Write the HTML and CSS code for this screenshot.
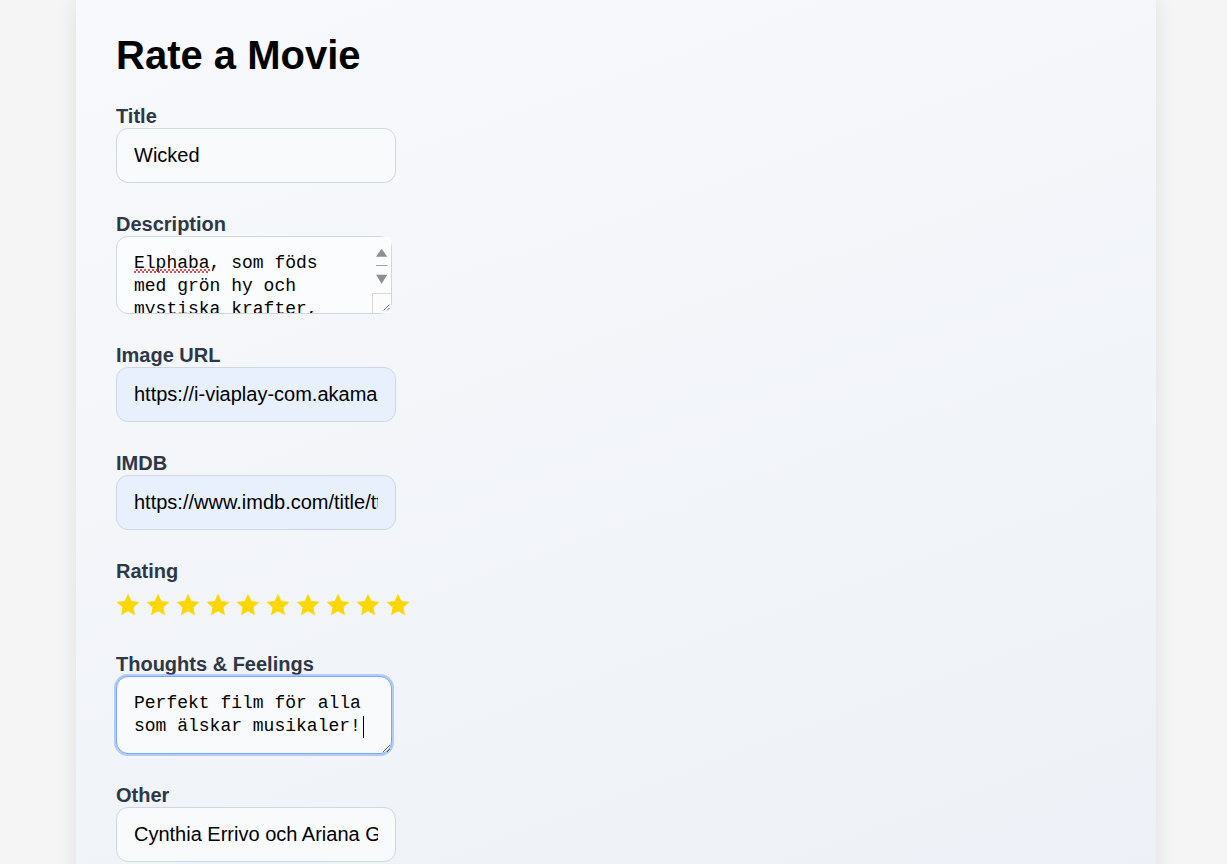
FILE: index.html
```html
<!DOCTYPE html>
<html lang="sv">
<head>
<meta charset="utf-8">
<title>Rate a Movie</title>
<link rel="stylesheet" href="styles.css">
</head>
<body>
<main class="card">
  <h1 class="page-title">Rate a Movie</h1>
  <form class="movie-form">
    <div class="group">
      <label class="label" for="title">Title</label>
      <input class="field" id="title" type="text" value="Wicked">
    </div>
    <div class="group">
      <label class="label" for="desc">Description</label>
      <div class="area-wrap">
        <textarea class="area area-scroll" id="desc" spellcheck="false">Elphaba, som föds med grön hy och mystiska krafter, blir vän med den populära Galinda när de båda studerar vid Shiz universitet i Oz.</textarea>
        <span class="squiggle"></span>
        <svg class="fake-scroll" viewBox="0 0 19 76" aria-hidden="true">
          <rect x="0" y="0" width="19" height="76" fill="#fcfcfd"/>
          <path d="M4 19.7h11.3L9.65 11.7z" fill="#8f8f8f"/>
          <path d="M4 28.5h11.5" stroke="#a0a0a0" stroke-width="1"/>
          <path d="M4 37.7h11.3L9.65 46.7z" fill="#8f8f8f"/>
          <path d="M0.5 76V56.5H19" fill="none" stroke="#d4d7dc" stroke-width="1"/>
          <path d="M17.5 67.5L11.5 73.5M17.5 71L15 73.5" stroke="#6f6f6f" stroke-width="1"/>
        </svg>
      </div>
    </div>
    <div class="group">
      <label class="label" for="img">Image URL</label>
      <input class="field field-filled" id="img" type="text" value="https://i-viaplay-com.akamaized.net/viaplay-prod/wicked.jpg">
    </div>
    <div class="group">
      <label class="label" for="imdb">IMDB</label>
      <input class="field field-filled" id="imdb" type="text" value="https://www.imdb.com/title/tt1262426/">
    </div>
    <div class="group">
      <span class="label">Rating</span>
      <div class="stars">
        <svg class="star" viewBox="0 0 24 24"><path d="M12 .8l3.4 7.3 7.9.9-5.9 5.4 1.6 7.9L12 18.3l-7 4 1.6-7.9L.7 9l7.9-.9z"/></svg>
        <svg class="star" viewBox="0 0 24 24"><path d="M12 .8l3.4 7.3 7.9.9-5.9 5.4 1.6 7.9L12 18.3l-7 4 1.6-7.9L.7 9l7.9-.9z"/></svg>
        <svg class="star" viewBox="0 0 24 24"><path d="M12 .8l3.4 7.3 7.9.9-5.9 5.4 1.6 7.9L12 18.3l-7 4 1.6-7.9L.7 9l7.9-.9z"/></svg>
        <svg class="star" viewBox="0 0 24 24"><path d="M12 .8l3.4 7.3 7.9.9-5.9 5.4 1.6 7.9L12 18.3l-7 4 1.6-7.9L.7 9l7.9-.9z"/></svg>
        <svg class="star" viewBox="0 0 24 24"><path d="M12 .8l3.4 7.3 7.9.9-5.9 5.4 1.6 7.9L12 18.3l-7 4 1.6-7.9L.7 9l7.9-.9z"/></svg>
        <svg class="star" viewBox="0 0 24 24"><path d="M12 .8l3.4 7.3 7.9.9-5.9 5.4 1.6 7.9L12 18.3l-7 4 1.6-7.9L.7 9l7.9-.9z"/></svg>
        <svg class="star" viewBox="0 0 24 24"><path d="M12 .8l3.4 7.3 7.9.9-5.9 5.4 1.6 7.9L12 18.3l-7 4 1.6-7.9L.7 9l7.9-.9z"/></svg>
        <svg class="star" viewBox="0 0 24 24"><path d="M12 .8l3.4 7.3 7.9.9-5.9 5.4 1.6 7.9L12 18.3l-7 4 1.6-7.9L.7 9l7.9-.9z"/></svg>
        <svg class="star" viewBox="0 0 24 24"><path d="M12 .8l3.4 7.3 7.9.9-5.9 5.4 1.6 7.9L12 18.3l-7 4 1.6-7.9L.7 9l7.9-.9z"/></svg>
        <svg class="star" viewBox="0 0 24 24"><path d="M12 .8l3.4 7.3 7.9.9-5.9 5.4 1.6 7.9L12 18.3l-7 4 1.6-7.9L.7 9l7.9-.9z"/></svg>
      </div>
    </div>
    <div class="group">
      <label class="label" for="thoughts">Thoughts &amp; Feelings</label>
      <div class="area-wrap">
        <textarea class="area area-focus" id="thoughts" spellcheck="false">Perfekt film för alla som älskar musikaler!</textarea>
        <span class="caret"></span>
      </div>
    </div>
    <div class="group">
      <label class="label" for="other">Other</label>
      <input class="field" id="other" type="text" value="Cynthia Errivo och Ariana Grande">
    </div>
    <div class="group">
      <button class="submit" type="button">Save</button>
    </div>
  </form>
</main>
</body>
</html>
```
FILE: styles.css
```css
html {
  overflow: hidden;
}
body {
  margin: 0;
  background: #f5f5f5;
  font-family: "Liberation Sans", Arial, sans-serif;
}
.card {
  width: 1080px;
  box-sizing: border-box;
  margin-left: 76px;
  padding: 32px 40px 40px;
  background: linear-gradient(160deg, #f8f9fc 0%, #f1f4f8 55%, #eceff5 100%);
  box-shadow: 0 0 22px rgba(0, 0, 0, 0.09);
  min-height: 1000px;
}
.page-title {
  margin: 0 0 25px;
  font-size: 40px;
  line-height: 46px;
  font-weight: bold;
  color: #000;
}
.movie-form {
  display: flex;
  flex-direction: column;
}
.group {
  display: flex;
  flex-direction: column;
  align-items: flex-start;
  margin-bottom: 28px;
}
.label {
  display: block;
  font-size: 20px;
  line-height: 23px;
  font-weight: bold;
  color: #2d3748;
  padding-top: 2px;
}
.field {
  box-sizing: border-box;
  width: 280px;
  height: 55px;
  padding: 15px 17px;
  border: 1px solid #cfd7e3;
  border-radius: 12px;
  background: #f9fafc;
  font-family: "Liberation Sans", Arial, sans-serif;
  font-size: 20px;
  line-height: 23px;
  color: #000;
  outline: none;
}
.field-filled {
  background: #e8f0fe;
}
.area-wrap {
  position: relative;
}
.area {
  display: block;
  box-sizing: border-box;
  width: 276px;
  height: 78px;
  padding: 15px 17px;
  border: 1px solid #cfd7e3;
  border-radius: 12px;
  background: #fbfcfd;
  font-family: "Liberation Mono", "DejaVu Sans Mono", monospace;
  font-size: 18px;
  line-height: 23px;
  color: #000;
  resize: both;
  outline: none;
}
.area-scroll {
  overflow: hidden;
  resize: none;
  padding-right: 36px;
}
.fake-scroll {
  position: absolute;
  top: 1px;
  right: 1px;
  width: 19px;
  height: 76px;
}
.squiggle {
  position: absolute;
  left: 18px;
  top: 33px;
  width: 76px;
  height: 4px;
  background:
    linear-gradient(135deg, transparent 45%, #e03030 45%, #e03030 60%, transparent 60%) 0 0 / 4px 4px repeat-x,
    linear-gradient(45deg, transparent 45%, #e03030 45%, #e03030 60%, transparent 60%) 2px 0 / 4px 4px repeat-x;
  opacity: 0.85;
}
.area-focus {
  overflow: hidden;
  background: #f8fafc;
  border: 1px solid #7ea6f6;
  box-shadow: 0 0 0 2px rgba(130, 170, 250, 0.55);
}
.caret {
  position: absolute;
  left: 247px;
  top: 40px;
  width: 1px;
  height: 22px;
  background: #000;
}
.stars {
  display: flex;
  gap: 6px;
  height: 40px;
  box-sizing: border-box;
  padding-top: 10px;
}
.star {
  width: 24px;
  height: 24px;
  fill: #ffd700;
}
.submit {
  font-family: "Liberation Sans", Arial, sans-serif;
  font-size: 20px;
  padding: 14px 28px;
  border: none;
  border-radius: 12px;
  background: #4a5568;
  color: #fff;
}
```
